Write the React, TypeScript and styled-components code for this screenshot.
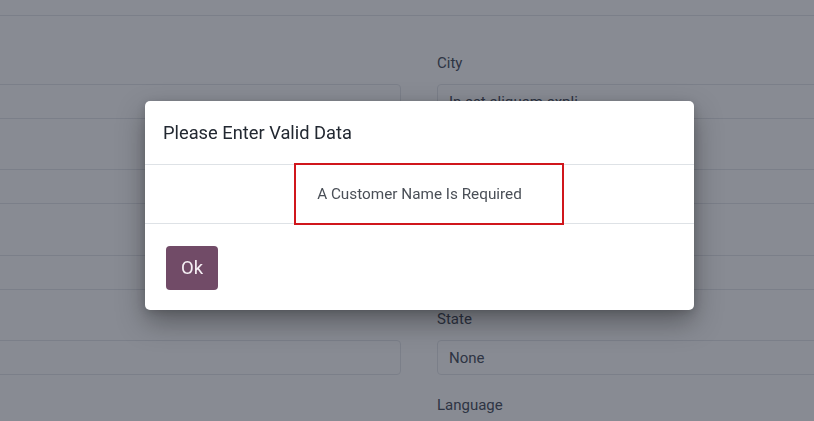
import React from 'react';
import styled, { createGlobalStyle } from 'styled-components';

const GlobalStyle = createGlobalStyle`
  html, body {
    margin: 0;
    padding: 0;
    background: #ffffff;
    font-family: Roboto, "Noto Sans", "Liberation Sans", sans-serif;
    overflow: hidden;
  }
  * {
    box-sizing: border-box;
  }
`;

const Page = styled.div`
  width: 814px;
  height: 421px;
  overflow: hidden;
  background: #ffffff;
`;

const TopBar = styled.div`
  height: 16px;
  border-bottom: 1px solid #e5e7eb;
`;

const FormGrid = styled.div`
  display: grid;
  grid-template-columns: 421px 420px;
  column-gap: 36px;
  margin-left: -20px;
  padding-top: 18px;
`;

const Column = styled.div`
  display: flex;
  flex-direction: column;
`;

const Field = styled.div`
  display: flex;
  flex-direction: column;
  height: 85.4px;
`;

const Label = styled.label`
  height: 50px;
  display: flex;
  align-items: flex-end;
  padding-bottom: 11px;
  font-size: 15px;
  line-height: 20px;
  color: #4b5260;
`;

const Input = styled.div`
  height: 35px;
  border: 1px solid #e5e7eb;
  border-radius: 4px;
  padding: 0 11px;
  display: flex;
  align-items: center;
  font-size: 15px;
  color: #4b5260;
  white-space: nowrap;
  overflow: hidden;
`;

const Backdrop = styled.div`
  position: fixed;
  inset: 0;
  background: rgba(17, 24, 39, 0.5);
  display: flex;
  align-items: flex-start;
  padding: 101px 0 0 145px;
`;

const Modal = styled.div`
  width: 549px;
  background: #ffffff;
  border-radius: 5px;
  box-shadow: 0 12px 28px rgba(0, 0, 0, 0.35), 0 2px 8px rgba(0, 0, 0, 0.15);
  display: flex;
  flex-direction: column;
`;

const ModalHeader = styled.div`
  height: 64px;
  padding: 0 18px;
  display: flex;
  align-items: center;
  border-bottom: 1px solid #dee2e6;
`;

const ModalTitle = styled.h4`
  margin: 0;
  font-size: 18.3px;
  font-weight: 400;
  color: #222831;
`;

const ModalBody = styled.div`
  position: relative;
  height: 59px;
  display: flex;
  align-items: center;
  justify-content: center;
  border-bottom: 1px solid #dee2e6;
`;

const Message = styled.p`
  margin: 0;
  font-size: 15.3px;
  color: #4a4f57;
`;

const Highlight = styled.div`
  position: absolute;
  left: 149px;
  top: -2px;
  width: 270px;
  height: 62px;
  border: 2px solid #d0161c;
  pointer-events: none;
`;

const ModalFooter = styled.div`
  height: 86px;
  padding: 22px 21px 0;
`;

const OkButton = styled.button`
  width: 52px;
  height: 44px;
  border: none;
  border-radius: 4px;
  background: #714b67;
  color: #f6f0f5;
  font-family: Roboto, "Noto Sans", sans-serif;
  font-size: 18.5px;
  padding: 0;
  cursor: pointer;
`;

const leftFields = ['', '', '', ''];
const rightFields = [
  { label: 'City', value: 'In est aliquam expli' },
  { label: 'Zip', value: '' },
  { label: 'Country', value: '' },
  { label: 'State', value: 'None' },
  { label: 'Language', value: '' },
];

const App = () => {
  return (
    <>
      <GlobalStyle />
      <Page>
        <TopBar />
        <FormGrid>
          <Column>
            {leftFields.map((value, i) => (
              <Field key={i}>
                <Label />
                <Input>{value}</Input>
              </Field>
            ))}
          </Column>
          <Column>
            {rightFields.map((f) => (
              <Field key={f.label}>
                <Label>{f.label}</Label>
                <Input>{f.value}</Input>
              </Field>
            ))}
          </Column>
        </FormGrid>
      </Page>

      <Backdrop>
        <Modal>
          <ModalHeader>
            <ModalTitle>Please Enter Valid Data</ModalTitle>
          </ModalHeader>
          <ModalBody>
            <Message>A Customer Name Is Required</Message>
            <Highlight />
          </ModalBody>
          <ModalFooter>
            <OkButton>Ok</OkButton>
          </ModalFooter>
        </Modal>
      </Backdrop>
    </>
  );
};

export default App;
